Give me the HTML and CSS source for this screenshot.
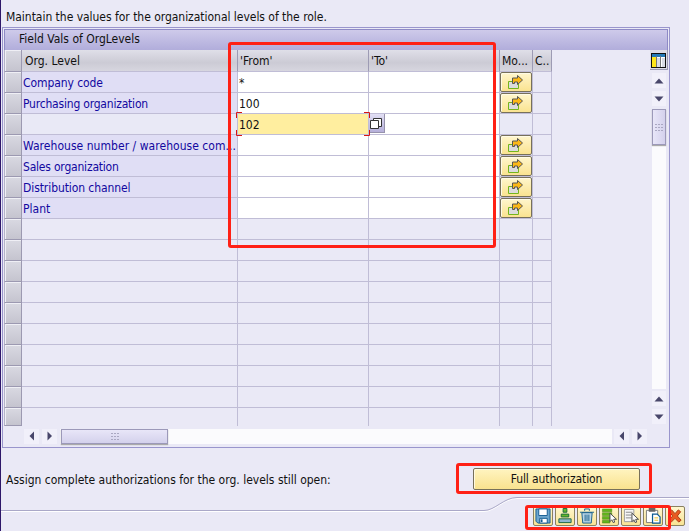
FILE: index.html
```html
<!DOCTYPE html>
<html lang="en">
<head>
<meta charset="utf-8">
<title>Organizational levels</title>
<link rel="stylesheet" href="styles.css">
</head>
<body>
<svg class="defs" width="0" height="0">
  <defs>
    <symbol id="arrow" viewBox="0 0 17 16">
      <path d="M1.500 6.500h10v7h-10z" fill="#dcdcdc" stroke="#74b51c"/>
      <path d="M5.500 8.500v-5.500h5V.5l5 4.500-5 4.500V7h-3v1.500z" fill="#fcb816" stroke="#555"/>
    </symbol>
    <symbol id="grip" viewBox="0 0 8 7">
      <path d="M0 0h2v1h-2zM3 0h2v1h-2zM6 0h2v1h-2zM0 3h2v1h-2zM3 3h2v1h-2zM6 3h2v1h-2zM0 6h2v1h-2zM3 6h2v1h-2zM6 6h2v1h-2z" fill="#aaa8c2"/>
    </symbol>
  </defs>
</svg>
<main class="screen">
  <p class="intro"><span>Maintain the values for the organizational levels of the role.</span></p>
  <section class="panel">
    <h1 class="title"><span>Field Vals of OrgLevels</span></h1>
    <div class="body">
      <div class="table" id="table">
        <div class="row head"><i class="sel"></i><b class="c1"><span>Org. Level</span></b><b><span>'From'</span></b><b><span>'To'</span></b><b><span>Mo...</span></b><b><span>C..</span></b></div>
      </div>
      <div class="vbar">
        <div class="config"><svg width="15" height="15" viewBox="0 0 15 15"><path d="M0 0h15v15H0z" fill="#111"/><path d="M1 1h13v13H1z" fill="#fff"/><path d="M1 1h13v3H1z" fill="#2479b7"/><path d="M1 4h4v10H1z" fill="#ffe619"/><path d="M6 5h3v9H6zM11 5h3v9h-3z" fill="#d9dbe3"/><path d="M5 3h1v11H5zM9 3h1v11H9z" fill="#777"/></svg></div>
        <div class="step"><svg width="10" height="6"><path d="M.5 5.500L5 .5l4.500 5z"/></svg></div>
        <div class="step"><svg width="10" height="6"><path d="M.5 .5L5 5.500 9.500 .5z"/></svg></div>
        <div class="track-v"><div class="thumb-v"><svg width="8" height="7"><use href="#grip"/></svg></div></div>
        <div class="step"><svg width="10" height="6"><path d="M.5 5.500L5 .5l4.500 5z"/></svg></div>
        <div class="step"><svg width="10" height="6"><path d="M.5 .5L5 5.500 9.500 .5z"/></svg></div>
      </div>
    </div>
    <div class="hbar">
      <div class="hstep"><svg width="6" height="10"><path d="M5 .5L.5 5l4.500 4.500z"/></svg></div>
      <div class="hstep"><svg width="6" height="10"><path d="M.5 .5L5 5 .5 9.500z"/></svg></div>
      <div class="track-h"><div class="thumb-h"><svg width="8" height="7"><use href="#grip"/></svg></div></div>
      <div class="hstep"><svg width="6" height="10"><path d="M5 .5L.5 5l4.500 4.500z"/></svg></div>
      <div class="hstep"><svg width="6" height="10"><path d="M.5 .5L5 5 .5 9.500z"/></svg></div>
    </div>
  </section>
  <div class="assign">
    <span class="t-assign">Assign complete authorizations for the org. levels still open:</span>
    <button class="full"><span>Full authorization</span></button>
  </div>
  <footer class="footer">
    <svg class="curve" width="688" height="34" viewBox="0 0 688 34"><path d="M0 14.500H483C494 14.500 503 1.500 516 1.500H688" fill="none" stroke="#fff"/><path d="M0 13.500H483C494 13.500 503 .5 516 .5H688" fill="none" stroke="#aaa8c8"/></svg>
    <div class="tools">
      <button><svg viewBox="0 0 17 17"><path d="M1 1h15v15H3l-2-2z" fill="#6ea7ce" stroke="#125b91"/><path d="M4 1h9v7H4z" fill="#fff" stroke="#125b91"/><path d="M5 11h8v5H5z" fill="#fff" stroke="#125b91"/><path d="M6 12h2v3H6z" fill="#125b91"/></svg></button>
      <button><svg viewBox="0 0 17 17"><path d="M6.500 .5h4v4h-4zM4.500 6.500h8v3h-8z" fill="#67b828" stroke="#176840"/><path d="M2 11.500h13v4H2z" fill="#8db6cf" stroke="#176840"/></svg></button>
      <button><svg viewBox="0 0 17 17"><path d="M3 5h11l-1 11H4z" fill="#b9d5e6" stroke="#155e8c"/><path d="M1 4.500h15M6 3V1h5v2M6.500 7v7M8.500 7v7M10.500 7v7" fill="none" stroke="#155e8c"/></svg></button>
      <button><svg viewBox="0 0 17 17"><path d="M1.500 1h10v3h-10zM1.500 5h10v3h-10zM1.500 9h8v3h-8zM1.500 13h8v3h-8z" fill="#62b51b" stroke="#447c17" stroke-width=".5"/><path d="M9.500 5.500v9l2-2 1.500 3 1.500-.5-1-3h3z" fill="#fff" stroke="#444"/></svg></button>
      <button><svg viewBox="0 0 17 17"><path d="M1.500 1.500h10v13h-10z" fill="#f7f7f7" stroke="#999"/><path d="M3 4.500h7M3 7.500h6M3 10.500h6" stroke="#888"/><path d="M9.500 5.500v9l2-2 1.500 3 1.500-.5-1-3h3z" fill="#fff" stroke="#444"/></svg></button>
      <button><svg viewBox="0 0 17 17"><path d="M1.500 2.500h12v13h-12z" fill="#fff" stroke="#777"/><path d="M4 0h7v4H4z" fill="#666"/><path d="M8 6.500h5l3 3V16H8z" fill="#fff" stroke="#0c5a92" stroke-width="1.300"/><path d="M10 10.500h4M10 13h4" stroke="#e6bd18"/></svg></button>
      <button><svg viewBox="0 0 17 17"><path d="M2.500 4L5 2l3.500 4L12 2l2.500 2L11 8.500l4 4.500-2.500 2-4-4-4 4L2 13l4-4.500z" fill="#e95b20" stroke="#a93410"/></svg></button>
    </div>
    <div class="mark mark-tools"></div>
  </footer>
  <div class="mark mark-columns"></div>
  <div class="mark mark-full"></div>
</main>
<script src="table.js"></script>
</body>
</html>
```
FILE: styles.css
```css
* { box-sizing: border-box; }
body { margin: 0; background: #eae9f6; overflow: hidden; font: 12px/15px "DejaVu Sans Condensed", "DejaVu Sans", sans-serif; color: #111; }
.defs { position: absolute; }
.screen { position: relative; width: 689px; height: 531px; border-left: 1px solid #2e1769; overflow: hidden; display: flex; flex-direction: column; }
span { white-space: nowrap; }
.intro { margin: 0; height: 27px; padding: 10px 0 0 5px; letter-spacing: -0.03px; }
.panel { flex: none; margin-left: 1px; width: 668px; height: 421px; border: 1px solid #9995cc; padding: 1px; }
.title { margin: 0; height: 21px; border: 1px solid #8e8ac6; border-bottom: 0; background: linear-gradient(#cecaea, #b1addb); font: inherit; line-height: 19px; padding-left: 14px; }
.body { display: flex; justify-content: space-between; height: 376px; }
.table { width: 548px; }
.row { display: grid; grid-template-columns: 18px 216px 131px 131px 33px 19px; grid-template-rows: 100%; height: 21px; }
.row > * { border-right: 1px solid #c0bdd6; border-bottom: 1px solid #c0bdd6; position: relative; min-width: 0; }
.row:last-child { height: 18px; }
.row:last-child > * { border-bottom: 0; }
.row > .sel { border: 1px solid #9c99b1; border-top: 0; border-left-color: #b5b3c9; background: linear-gradient(#d9d9e2, #c5c4cf); box-shadow: inset 1px 1px #efeff5; }
.row:last-child > .sel { border-bottom: 1px solid #9c99b1; }
.row.head { height: 22px; }
.head > b { font-weight: normal; line-height: 22px; padding-left: 2px; background: linear-gradient(#dfdfe8, #cccbd5 60%, #d7d6df); border-right-color: #9d9bb4; }
.head > .c1 { padding-left: 3px; }
.label { background: #e0def5; color: #1208a0; line-height: 22px; padding-left: 1px; overflow: hidden; }
.label.empty { background: #e9e9f6; }
.tight { letter-spacing: -0.2px; }
.snug { letter-spacing: -0.08px; }
.wide { letter-spacing: 0.04px; }
.cell.white { background: #fff; }
.cell { line-height: 22px; padding-left: 1px; }
.row > .cell.active { background: #ffee9f; }
.corners { position: absolute; inset: -2px; z-index: 2; }
.help { position: absolute; left: 0; top: 0; width: 16px; height: 19px; background: linear-gradient(#e2dff4, #b5afd9); border-right: 1px solid #9692ac; border-bottom: 1px solid #9692ac; }
.help svg, .more svg { display: block; }
.more { padding: 0; background: #e9e9f6; }
.more div { width: 32px; height: 20px; border: 1px solid #77705a; border-radius: 2px; background: linear-gradient(#fff6cd, #fae390); padding: 2px 0 0 6px; box-shadow: inset 1px 1px #fffbe5; }
.vbar { width: 18px; display: flex; flex-direction: column; align-items: center; }
.config { width: 18px; height: 20px; padding: 3px 1px 0; border-right: 1px solid #9c99b1; border-bottom: 1px solid #9c99b1; background: #dddce6; margin-bottom: 3px; }
.config svg { display: block; }
.step { width: 14px; height: 15px; margin-bottom: 3px; background: #f1f0fa; display: flex; align-items: center; justify-content: center; }
.step:last-child { margin-bottom: 2px; }
.step path, .hstep path { fill: #48466a; }
.track-v { width: 14px; flex: 1; background: #fbfbfd; margin-bottom: 2px; }
.thumb-v { width: 14px; height: 36px; border: 1px solid #9c99b9; box-shadow: 0 1px 1px #aaa; background: linear-gradient(90deg, #e8e6f8, #d4d1ec); display: flex; align-items: center; justify-content: center; }
.hbar { height: 20px; display: flex; align-items: center; padding: 0 21px 0 20px; gap: 3px; }
.hstep { width: 15px; height: 15px; background: #f1f0fa; display: flex; align-items: center; justify-content: center; }
.track-h { flex: 1; height: 15px; background: #fbfbfd; padding-left: 1px; margin-right: -1px; }
.thumb-h { width: 107px; height: 15px; border: 1px solid #9c99b9; box-shadow: 0 1px 1px #aaa; background: linear-gradient(#e8e6f8, #d4d1ec); display: flex; align-items: center; justify-content: center; }
.assign { height: 49px; flex: none; display: flex; padding: 20px 0 0 5px; }
.t-assign { width: 467px; padding-top: 5px; }
.full { width: 167px; height: 22px; border: 1px solid #77705a; border-radius: 2px; padding: 0; background: linear-gradient(#fff4c0, #f9e28e); font: inherit; letter-spacing: -0.1px; color: #111; box-shadow: inset 1px 1px #fffae0; }
.footer { position: relative; height: 34px; flex: none; }
.curve { position: absolute; left: 0; top: 0; }
.tools { position: relative; display: flex; gap: 2px; padding: 9px 0 0 532px; }
.tools button { width: 20px; height: 20px; padding: 1px; border: 1px solid #8a8160; border-radius: 2px; background: linear-gradient(#fff7cf, #f9e394); }
.tools svg { display: block; width: 16px; height: 16px; }
.mark { position: absolute; border: 3px solid #ff2015; border-radius: 3px; }
.mark-columns { left: 227px; top: 42px; width: 268px; height: 206px; z-index: 5; }
.mark-full { left: 455px; top: 463px; width: 196px; height: 31px; }
.mark-tools { left: 524px; top: 8px; width: 146px; height: 25px; }
```
FILE: table.js
```js
// label, from-value, has multiple-selection button, label tracking
const rows = [
  ["Company code", "*", true, "snug"],
  ["Purchasing organization", "100", true, "tight"],
  ["", "102", false, ""],
  ["Warehouse number / warehouse com...", "", true, "wide"],
  ["Sales organization", "", true, "tight"],
  ["Distribution channel", "", true, "snug"],
  ["Plant", "", true, ""]
];
const table = document.getElementById("table");
const corners = '<svg class="corners" width="134" height="24" fill="none" stroke="#d81515"><path d="M.5 6V.5H6M128 .5h5.500V6M.5 18v5.500H6M128 23.500h5.500V18"/></svg>';
const help = '<div class="help"><svg width="15" height="18" fill="#fff" stroke="#333"><path d="M4.500 4.500h8v8h-8z"/><path d="M1.500 6.500h8v8h-8z"/></svg></div>';
for (let i = 0; i < 17; i++) {
  const r = rows[i];
  const white = r ? " white" : "";
  const active = i === 2;
  table.insertAdjacentHTML("beforeend", `<div class="row"><i class="sel"></i>` +
    `<div class="${r ? "label" : "cell"}${r && !r[0] ? " empty" : ""}"><span class="${r ? r[3] : ""}">${r ? r[0] : ""}</span></div>` +
    `<div class="cell${white}${active ? " active" : ""}"><span>${r ? r[1] : ""}</span>${active ? corners : ""}</div>` +
    `<div class="cell${white}">${active ? help : ""}</div>` +
    `<div class="more">${r && r[2] ? '<div><svg width="17" height="16"><use href="#arrow"/></svg></div>' : ""}</div>` +
    `<div class="cell"></div></div>`);
}
```
